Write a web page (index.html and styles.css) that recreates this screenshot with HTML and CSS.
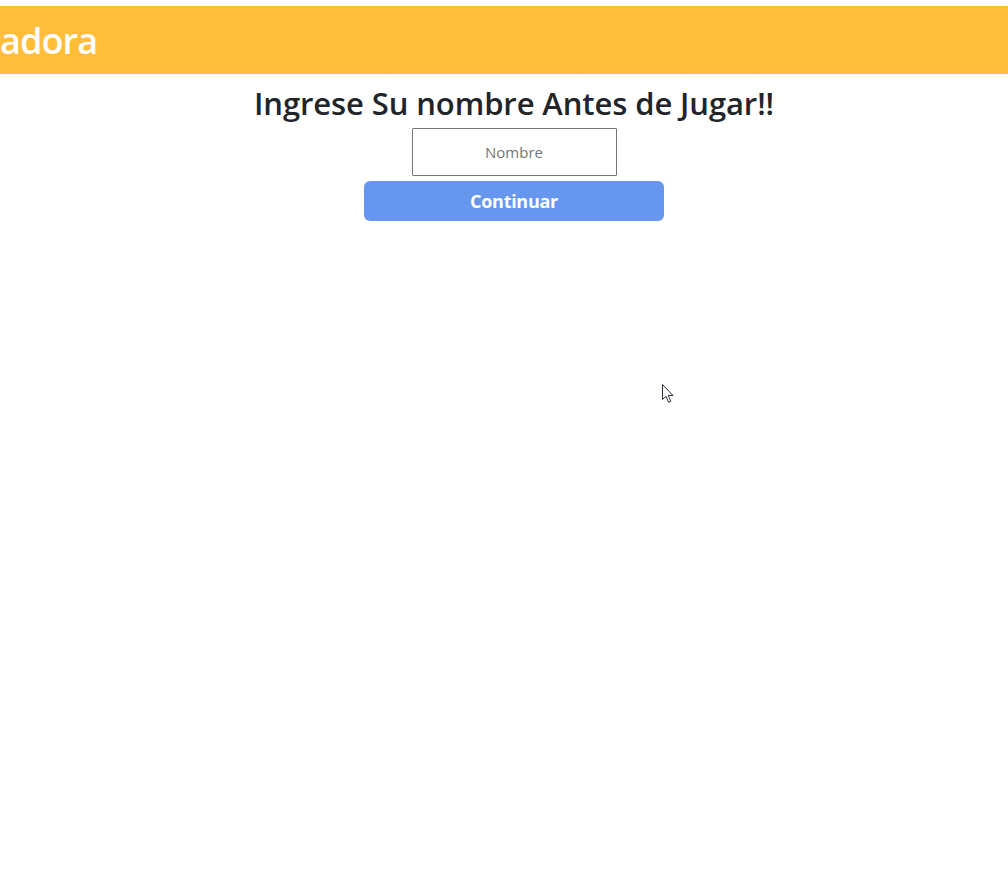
FILE: index.html
```html
<!DOCTYPE html>
<html lang="es">
<head>
<meta charset="utf-8">
<link rel="stylesheet" href="styles.css">
</head>
<body>
<header class="topbar"><h1 class="brand">adora</h1></header>
<main class="content">
  <h2 class="title">Ingrese Su nombre Antes de Jugar!!</h2>
  <input class="name-input" type="text" placeholder="Nombre">
  <button class="continue-btn">Continuar</button>
</main>
<svg class="cursor" width="13" height="20" viewBox="0 0 13 20"><path d="M0.5 0.5 L0.5 15.5 L4 12.2 L6.6 18.3 L8.8 17.4 L6.3 11.5 L11 11.5 Z" fill="#fff" stroke="#2a2f3a" stroke-width="1" stroke-linejoin="miter"/></svg>
</body>
</html>
```
FILE: styles.css
```css
html, body { margin: 0; padding: 0; background: #fff; }
body {
  font-family: "Open Sans", "Noto Sans", "Liberation Sans", sans-serif;
  color: #212529;
  padding-top: 6px;
  min-height: 879px;
  position: relative;
}
.topbar {
  height: 68px;
  background: #ffbd3a;
  display: flex;
  align-items: center;
}
.brand {
  margin: 2px 0 0 0;
  color: #fff;
  font-size: 36px;
  font-weight: 600;
  line-height: 1;
  letter-spacing: -0.9px;
}
.content {
  display: flex;
  flex-direction: column;
  align-items: center;
  padding-top: 10px;
  padding-left: 20px;
}
.title {
  margin: 0;
  font-size: 31px;
  font-weight: 600;
  line-height: 38px;
  letter-spacing: -0.1px;
}
.name-input {
  box-sizing: border-box;
  width: 205px;
  height: 48px;
  margin-top: 6px;
  border: 1px solid #767676;
  border-radius: 1px;
  text-align: center;
  font-family: inherit;
  font-size: 15px;
  color: #212529;
  outline: none;
}
.name-input::placeholder { color: #757575; }
.continue-btn {
  box-sizing: border-box;
  width: 300px;
  height: 40px;
  margin-top: 5px;
  border: none;
  border-radius: 6px;
  background: #6796ee;
  color: #fff;
  font-family: inherit;
  font-size: 18px;
  font-weight: 700;
  letter-spacing: -0.3px;
}
.cursor {
  position: absolute;
  left: 662px;
  top: 384px;
}
```
